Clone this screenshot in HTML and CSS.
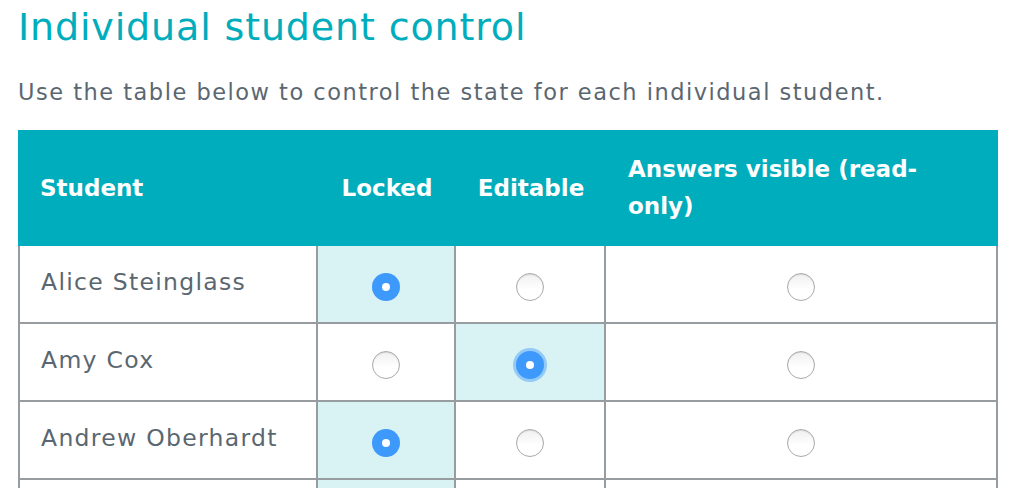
FILE: index.html
```html
<!DOCTYPE html>
<html lang="en">
<head>
<meta charset="utf-8">
<title>Individual student control</title>
<link rel="stylesheet" href="styles.css">
</head>
<body>
<main class="page">
  <h1 class="title">Individual student control</h1>
  <p class="intro">Use the table below to control the state for each individual student.</p>
  <table class="students">
    <colgroup>
      <col class="col-name">
      <col class="col-locked">
      <col class="col-editable">
      <col class="col-answers">
    </colgroup>
    <thead>
      <tr>
        <th class="th-name">Student</th>
        <th class="th-center">Locked</th>
        <th class="th-center">Editable</th>
        <th class="th-answers"><span class="wrap">Answers visible (read-only)</span></th>
      </tr>
    </thead>
    <tbody>
      <tr>
        <td class="name">Alice Steinglass</td>
        <td class="radio-cell selected"><span class="radio checked"></span></td>
        <td class="radio-cell"><span class="radio"></span></td>
        <td class="radio-cell"><span class="radio"></span></td>
      </tr>
      <tr>
        <td class="name">Amy Cox</td>
        <td class="radio-cell"><span class="radio"></span></td>
        <td class="radio-cell selected"><span class="radio checked focused"></span></td>
        <td class="radio-cell"><span class="radio"></span></td>
      </tr>
      <tr>
        <td class="name">Andrew Oberhardt</td>
        <td class="radio-cell selected"><span class="radio checked"></span></td>
        <td class="radio-cell"><span class="radio"></span></td>
        <td class="radio-cell"><span class="radio"></span></td>
      </tr>
      <tr>
        <td class="name"></td>
        <td class="radio-cell selected"><span class="radio checked"></span></td>
        <td class="radio-cell"><span class="radio"></span></td>
        <td class="radio-cell"><span class="radio"></span></td>
      </tr>
    </tbody>
  </table>
</main>
</body>
</html>
```

FILE: styles.css
```css
html, body {
  margin: 0;
  padding: 0;
  background: #ffffff;
}

.page {
  padding: 0 16px 0 18px;
  font-family: "DejaVu Sans", "Open Sans", sans-serif;
}

.title {
  margin: 1px 0 0 0;
  font-size: 38px;
  font-weight: 400;
  line-height: 53px;
  letter-spacing: 0.85px;
  color: #00adbc;
}

.intro {
  margin: 22px 0 22px 0;
  font-size: 22.5px;
  line-height: 32px;
  letter-spacing: 1.5px;
  color: #5b6770;
}

.students {
  width: 980px;
  table-layout: fixed;
  border-collapse: separate;
  border-spacing: 0;
}

.col-name { width: 300px; }
.col-locked { width: 138px; }
.col-editable { width: 150px; }
.col-answers { width: 392px; }

.students th {
  height: 116px;
  padding: 0 22px;
  background: #00adbc;
  color: #ffffff;
  font-size: 23px;
  font-weight: 700;
  line-height: 37px;
  text-align: left;
  vertical-align: middle;
  box-sizing: border-box;
}

.students th.th-center {
  text-align: center;
  padding: 0 4px;
}

.th-answers .wrap {
  display: block;
  max-width: 320px;
}

.students td {
  height: 78px;
  box-sizing: border-box;
  border-right: 2px solid #979ca0;
  border-bottom: 2px solid #979ca0;
  font-size: 23.5px;
  letter-spacing: 1.3px;
  color: #5b6770;
  vertical-align: middle;
}

.students td.name {
  border-left: 2px solid #979ca0;
  padding: 0 20px 4px 21px;
}

.radio-cell {
  text-align: center;
  padding: 5px 0 0 0;
}

.radio-cell.selected {
  background: #d9f2f4;
}

.radio {
  display: inline-block;
  width: 28px;
  height: 28px;
  box-sizing: border-box;
  border-radius: 50%;
  border: 1px solid #aaaaaa;
  background: linear-gradient(#f0f0f0, #ffffff 60%);
  box-shadow: inset 0 1px 1px rgba(0, 0, 0, 0.1);
  vertical-align: middle;
  position: relative;
}

.radio.checked {
  border: none;
  background: #3d99fc;
  box-shadow: none;
}

.radio.checked::after {
  content: "";
  position: absolute;
  left: 10px;
  top: 10px;
  width: 8px;
  height: 8px;
  border-radius: 50%;
  background: #ffffff;
}

.radio.focused {
  box-shadow: 0 0 0 3px rgba(61, 153, 252, 0.45);
}
```
